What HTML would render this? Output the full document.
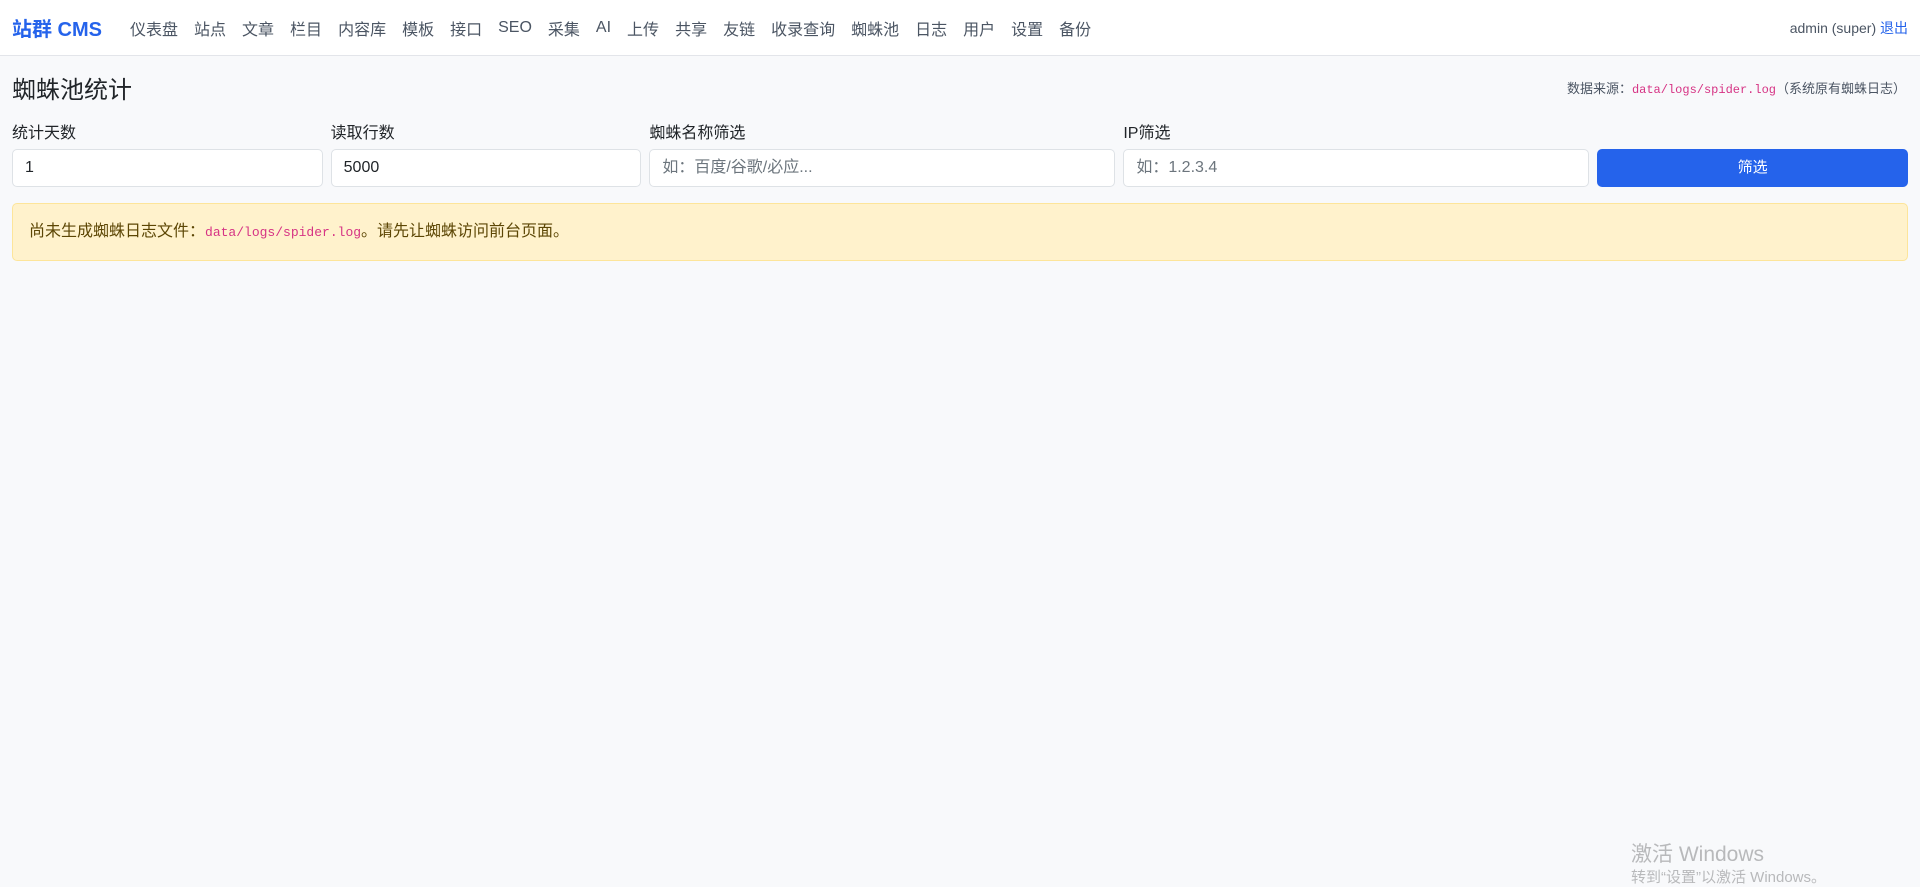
<!DOCTYPE html>
<html><head><meta charset="utf-8"><style>
*{box-sizing:border-box;margin:0;padding:0}
body{width:1920px;height:881px;overflow:hidden;background:#f8f9fb;font-family:"Liberation Sans","Noto Sans CJK SC",sans-serif;color:#212529;position:relative}
.nav{height:56px;background:#fff;border-bottom:1px solid #e3e5ea;display:flex;align-items:center;padding:0 12px}
.brand{font-weight:bold;font-size:20px;color:#2563eb;margin-right:28px;white-space:nowrap}
.nav a{font-size:16px;color:#4b5563;margin-right:16px;text-decoration:none;white-space:nowrap}
.user{margin-left:auto;font-size:14px;color:#4b5563}
.user span{color:#2563eb}
.hdr{display:flex;justify-content:space-between;align-items:center;padding:0 14px 0 12px;margin-top:15px;height:32px}
h1{font-size:24px;font-weight:normal;color:#212529}
.src{font-size:13px;color:#4b5563}
code{font-family:"Liberation Mono",monospace;color:#d63384;font-size:12px}
.grid{display:grid;grid-template-columns:2fr 2fr 3fr 3fr 2fr;gap:8px;padding:0 12px;margin-top:16px}
label{display:block;font-size:16px;height:20px;margin-bottom:10px;color:#212529}
.inp{height:38px;border:1px solid #dee2e6;border-radius:5px;background:#fff;font-size:16px;padding:0 12px;line-height:36px;color:#212529}
.ph{color:#6c757d}
.btn{height:38px;background:#2563eb;border-radius:5px;color:#fff;font-size:15px;text-align:center;line-height:38px;margin-top:30px}
.alert{margin:16px 12px 0;height:58px;background:#fff2cc;border:1px solid #fde59a;border-radius:5px;padding:0 16px;line-height:56px;font-size:16px;color:#5c4604}
.alert code{font-size:13px}
.wm{position:absolute;left:1631px;top:838px;color:#b8b9bb;font-size:21px;white-space:nowrap}
.wm2{position:absolute;left:1631px;top:866px;color:#b8b9bb;font-size:15px;white-space:nowrap}
</style></head><body>
<div class="nav"><div class="brand">站群 CMS</div>
<a>仪表盘</a><a>站点</a><a>文章</a><a>栏目</a><a>内容库</a><a>模板</a><a>接口</a><a>SEO</a><a>采集</a><a>AI</a><a>上传</a><a>共享</a><a>友链</a><a>收录查询</a><a>蜘蛛池</a><a>日志</a><a>用户</a><a>设置</a><a>备份</a>
<div class="user">admin (super) <span>退出</span></div></div>
<div class="hdr"><h1>蜘蛛池统计</h1><div class="src">数据来源：<code>data/logs/spider.log</code>（系统原有蜘蛛日志）</div></div>
<div class="grid">
<div><label>统计天数</label><div class="inp">1</div></div>
<div><label>读取行数</label><div class="inp">5000</div></div>
<div><label>蜘蛛名称筛选</label><div class="inp ph">如：百度/谷歌/必应...</div></div>
<div><label>IP筛选</label><div class="inp ph">如：1.2.3.4</div></div>
<div><div class="btn">筛选</div></div>
</div>
<div class="alert">尚未生成蜘蛛日志文件：<code>data/logs/spider.log</code>。请先让蜘蛛访问前台页面。</div>
<div class="wm">激活 Windows</div>
<div class="wm2">转到“设置”以激活 Windows。</div>
</body></html>
